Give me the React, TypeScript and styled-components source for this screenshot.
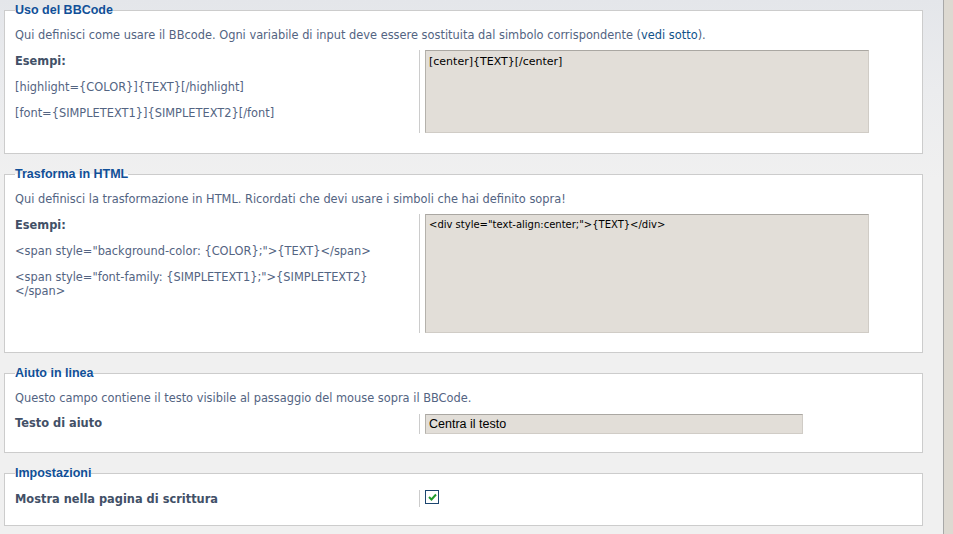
import React from "react";
import styled, { createGlobalStyle } from "styled-components";

const Global = createGlobalStyle`
  html, body { margin: 0; padding: 0; }
  body {
    width: 953px;
    height: 534px;
    overflow: hidden;
    font-family: "DejaVu Sans", Verdana, sans-serif;
    font-size: 11.4px;
    color: #536482;
  }
`;

const Page = styled.div`
  display: flex;
  width: 953px;
  height: 534px;
`;

const Main = styled.main`
  flex: 1;
  display: flex;
  flex-direction: column;
  gap: 11px;
  padding: 1px 20px 0 4px;
  background: linear-gradient(#e4e6ea 0, #ebecee 90px, #f0f0f0 180px, #f0f0f0);
`;

const SideStrip = styled.div`
  width: 9px;
  border-left: 1px solid #a8a8a8;
  background: #ddd9d1;
`;

const Fieldset = styled.fieldset<{ $pb: number }>`
  margin: 0;
  padding: 0 10px ${(p) => p.$pb}px 10px;
  border: 1px solid #cccccc;
  background: #ffffff;
  min-width: 0;
`;

const Legend = styled.legend`
  padding: 0;
  font-family: "Liberation Sans", Arial, sans-serif;
  font-weight: bold;
  font-size: 12.5px;
  line-height: 18px;
  color: #115098;
`;

const Description = styled.p`
  margin: 9px 0 0;
  line-height: 14px;
`;

const Link = styled.a`
  color: #105289;
  text-decoration: none;
`;

const Row = styled.div<{ $mt: number }>`
  display: grid;
  grid-template-columns: 404px 1fr;
  margin-top: ${(p) => p.$mt}px;
  align-items: start;
`;

const LabelCol = styled.div<{ $pt: number }>`
  display: flex;
  flex-direction: column;
  gap: 12px;
  padding-top: ${(p) => p.$pt}px;
`;

const Label = styled.div`
  font-weight: bold;
  color: #425067;
  line-height: 14px;
`;

const Example = styled.div`
  line-height: 14px;
`;

const FieldCol = styled.div`
  border-left: 1px solid #cccccc;
  padding-left: 5px;
  display: flex;
`;

const Area = styled.div<{ $h: number; $small?: boolean }>`
  width: 444px;
  height: ${(p) => p.$h}px;
  box-sizing: border-box;
  background: #e2ded8;
  border: 1px solid #d0ccc6;
  border-top-color: #aaa7a2;
  border-left-color: #b4b1ab;
  padding: ${(p) => (p.$small ? "3px 3px" : "4px 3px")};
  font-family: "DejaVu Sans", Tahoma, sans-serif;
  font-size: ${(p) => (p.$small ? "10px" : "11px")};
  line-height: 14px;
  color: #000;
`;

const Input = styled.div`
  width: 378px;
  height: 20px;
  box-sizing: border-box;
  background: #e2ded8;
  border: 1px solid #d0ccc6;
  border-top-color: #aaa7a2;
  border-left-color: #b4b1ab;
  padding: 0 3px;
  font-family: "Liberation Sans", Tahoma, sans-serif;
  font-size: 12.5px;
  line-height: 18px;
  color: #000;
`;

const CheckBox = styled.span`
  display: flex;
  align-items: center;
  justify-content: center;
  width: 12px;
  height: 12px;
  margin: 0 0 3px;
  border: 1px solid #1c4670;
  background: #fff;
`;

export default function App() {
  return (
    <>
      <Global />
      <Page>
        <Main>
          <Fieldset $pb={20}>
            <Legend>Uso del BBCode</Legend>
            <Description>
              Qui definisci come usare il BBcode. Ogni variabile di input deve essere sostituita dal simbolo corrispondente (
              <Link href="#">vedi sotto</Link>).
            </Description>
            <Row $mt={8}>
              <LabelCol $pt={4}>
                <Label>Esempi:</Label>
                <Example>[highlight={"{COLOR}"}]{"{TEXT}"}[/highlight]</Example>
                <Example>[font={"{SIMPLETEXT1}"}]{"{SIMPLETEXT2}"}[/font]</Example>
              </LabelCol>
              <FieldCol>
                <Area $h={83}>[center]{"{TEXT}"}[/center]</Area>
              </FieldCol>
            </Row>
          </Fieldset>

          <Fieldset $pb={19}>
            <Legend>Trasforma in HTML</Legend>
            <Description>
              Qui definisci la trasformazione in HTML. Ricordati che devi usare i simboli che hai definito sopra!
            </Description>
            <Row $mt={8}>
              <LabelCol $pt={4}>
                <Label>Esempi:</Label>
                <Example>&lt;span style="background-color: {"{COLOR}"};"&gt;{"{TEXT}"}&lt;/span&gt;</Example>
                <Example>
                  &lt;span style="font-family: {"{SIMPLETEXT1}"};"&gt;{"{SIMPLETEXT2}"}
                  <br />
                  &lt;/span&gt;
                </Example>
              </LabelCol>
              <FieldCol>
                <Area $h={119} $small>&lt;div style="text-align:center;"&gt;{"{TEXT}"}&lt;/div&gt;</Area>
              </FieldCol>
            </Row>
          </Fieldset>

          <Fieldset $pb={18}>
            <Legend>Aiuto in linea</Legend>
            <Description>Questo campo contiene il testo visibile al passaggio del mouse sopra il BBCode.</Description>
            <Row $mt={9}>
              <LabelCol $pt={2}>
                <Label>Testo di aiuto</Label>
              </LabelCol>
              <FieldCol>
                <Input>Centra il testo</Input>
              </FieldCol>
            </Row>
          </Fieldset>

          <Fieldset $pb={18}>
            <Legend>Impostazioni</Legend>
            <Row $mt={8}>
              <LabelCol $pt={2}>
                <Label>Mostra nella pagina di scrittura</Label>
              </LabelCol>
              <FieldCol>
                <CheckBox>
                  <svg width="9" height="8" viewBox="0 0 9 8">
                    <path d="M1 4 L3.5 6.5 L8 1.5" fill="none" stroke="#1f9b2c" strokeWidth="2" />
                  </svg>
                </CheckBox>
              </FieldCol>
            </Row>
          </Fieldset>
        </Main>
        <SideStrip />
      </Page>
    </>
  );
}
